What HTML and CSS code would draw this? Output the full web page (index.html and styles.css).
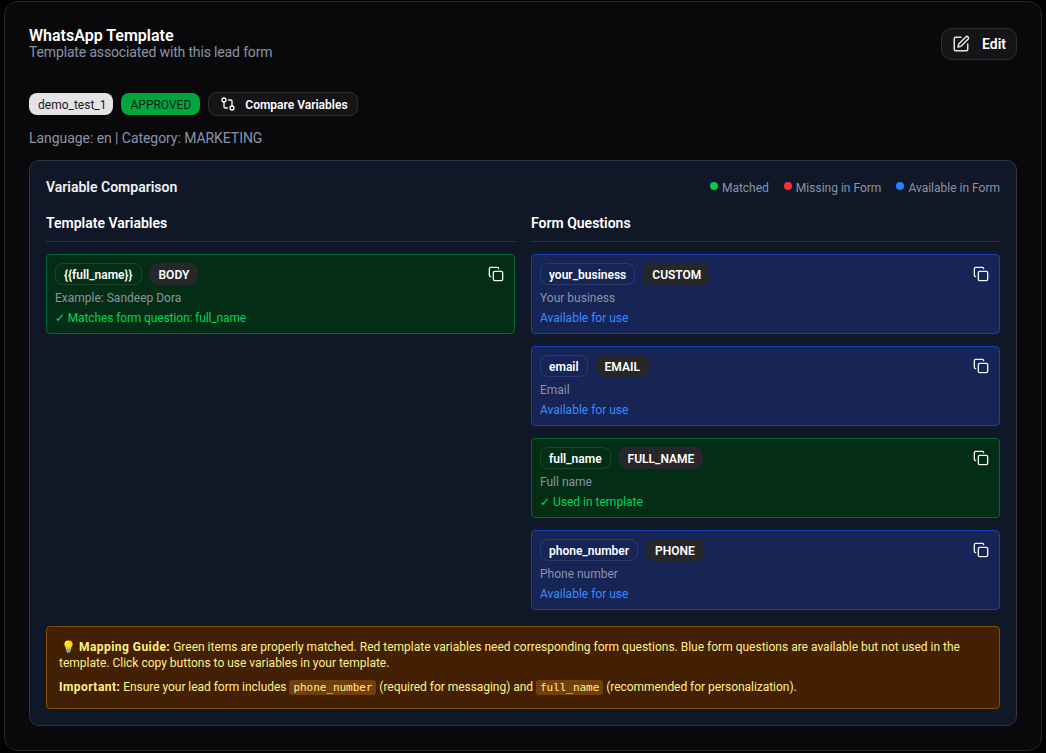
FILE: index.html
```html
<!DOCTYPE html>
<html lang="en">
<head>
  <title>WhatsApp Template</title>
  <meta charset="utf-8" />
  <link rel="stylesheet" href="styles.css">
</head>
<body>
  <section class="card">
    <header class="card-head">
      <div>
        <h1>WhatsApp Template</h1>
        <p class="sub">Template associated with this lead form</p>
      </div>
      <button class="btn btn-edit">
        <svg viewBox="0 0 24 24" width="18" height="18"><path d="M12 3H5a2 2 0 0 0-2 2v14a2 2 0 0 0 2 2h14a2 2 0 0 0 2-2v-7"/><path d="M18.4 2.6a2.1 2.1 0 0 1 3 3L12 15l-4 1 1-4z"/></svg>
        Edit
      </button>
    </header>

    <div class="chips">
      <span class="chip chip-name">demo_test_1</span>
      <span class="chip chip-ok">APPROVED</span>
      <button class="btn btn-compare">
        <svg viewBox="0 0 24 24" width="16" height="16"><circle cx="18" cy="18" r="3"/><circle cx="6" cy="6" r="3"/><path d="M13 6h3a2 2 0 0 1 2 2v7"/><path d="M11 18H8a2 2 0 0 1-2-2V9"/></svg>
        <span class="btn-label">Compare Variables</span>
      </button>
    </div>
    <p class="meta">Language: en | Category: MARKETING</p>

    <div class="panel">
      <div class="panel-head">
        <h2>Variable Comparison</h2>
        <div class="legend">
          <span><i class="dot dot-green"></i>Matched</span>
          <span><i class="dot dot-red"></i>Missing in Form</span>
          <span><i class="dot dot-blue"></i>Available in Form</span>
        </div>
      </div>

      <div class="cols">
        <div class="col">
          <h3>Template Variables</h3>
          <div class="item item-green">
            <div class="item-main">
              <div class="tags"><span class="tag">{{full_name}}</span><span class="kind">BODY</span></div>
              <p class="desc">Example: Sandeep Dora</p>
              <p class="state state-long">✓ Matches form question: full_name</p>
            </div>
            <svg class="copy" viewBox="0 0 24 24" width="16" height="16"><rect x="8" y="8" width="14" height="14" rx="2"/><path d="M4 16a2 2 0 0 1-2-2V4a2 2 0 0 1 2-2h10a2 2 0 0 1 2 2"/></svg>
          </div>
        </div>

        <div class="col">
          <h3>Form Questions</h3>
          <div class="item item-blue">
            <div class="item-main">
              <div class="tags"><span class="tag">your_business</span><span class="kind">CUSTOM</span></div>
              <p class="desc">Your business</p>
              <p class="state">Available for use</p>
            </div>
            <svg class="copy" viewBox="0 0 24 24" width="16" height="16"><rect x="8" y="8" width="14" height="14" rx="2"/><path d="M4 16a2 2 0 0 1-2-2V4a2 2 0 0 1 2-2h10a2 2 0 0 1 2 2"/></svg>
          </div>
          <div class="item item-blue">
            <div class="item-main">
              <div class="tags"><span class="tag">email</span><span class="kind">EMAIL</span></div>
              <p class="desc">Email</p>
              <p class="state">Available for use</p>
            </div>
            <svg class="copy" viewBox="0 0 24 24" width="16" height="16"><rect x="8" y="8" width="14" height="14" rx="2"/><path d="M4 16a2 2 0 0 1-2-2V4a2 2 0 0 1 2-2h10a2 2 0 0 1 2 2"/></svg>
          </div>
          <div class="item item-green">
            <div class="item-main">
              <div class="tags"><span class="tag">full_name</span><span class="kind">FULL_NAME</span></div>
              <p class="desc">Full name</p>
              <p class="state">✓ Used in template</p>
            </div>
            <svg class="copy" viewBox="0 0 24 24" width="16" height="16"><rect x="8" y="8" width="14" height="14" rx="2"/><path d="M4 16a2 2 0 0 1-2-2V4a2 2 0 0 1 2-2h10a2 2 0 0 1 2 2"/></svg>
          </div>
          <div class="item item-blue">
            <div class="item-main">
              <div class="tags"><span class="tag">phone_number</span><span class="kind">PHONE</span></div>
              <p class="desc">Phone number</p>
              <p class="state">Available for use</p>
            </div>
            <svg class="copy" viewBox="0 0 24 24" width="16" height="16"><rect x="8" y="8" width="14" height="14" rx="2"/><path d="M4 16a2 2 0 0 1-2-2V4a2 2 0 0 1 2-2h10a2 2 0 0 1 2 2"/></svg>
          </div>
        </div>
      </div>

      <div class="guide">
        <p><span class="bulb">💡</span><b>Mapping Guide:</b> Green items are properly matched. Red template variables need corresponding form questions. Blue form questions are available but not used in the template. Click copy buttons to use variables in your template.</p>
        <p class="guide-2"><b>Important:</b> Ensure your lead form includes <code>phone_number</code> (required for messaging) and <code>full_name</code> (recommended for personalization).</p>
      </div>
    </div>
  </section>
</body>
</html>
```

FILE: styles.css
```css
* {
  margin: 0;
  padding: 0;
  box-sizing: border-box;
}

html, body {
  height: 753px;
  overflow: hidden;
}

body {
  background: #020203;
  padding: 1px 4px 2px;
  font-family: Roboto, "Noto Sans", sans-serif;
  color: #fff;
}

svg {
  fill: none;
  stroke: currentColor;
  stroke-width: 2;
  stroke-linecap: round;
  stroke-linejoin: round;
  flex-shrink: 0;
}

.card {
  height: 750px;
  background: #09090b;
  border: 1px solid #27272a;
  border-radius: 14px;
  padding: 23px 24px 24px;
}

.card-head {
  display: flex;
  justify-content: space-between;
  align-items: flex-start;
  height: 67px;
}

h1 {
  margin-top: 3px;
  font-size: 16px;
  font-weight: 600;
  line-height: 16px;
}

.sub {
  font-size: 14px;
  line-height: 16px;
  letter-spacing: -0.15px;
  color: #8b93a7;
}

.btn {
  display: inline-flex;
  align-items: center;
  font-family: inherit;
  color: #fff;
  background: #151517;
  border: 1px solid #2e2e32;
}

.btn-edit {
  width: 76px;
  height: 32px;
  margin-top: 3px;
  padding-left: 10px;
  gap: 12px;
  border-radius: 10px;
  font-size: 14px;
  font-weight: 600;
}

.btn-edit svg {
  color: #e4e4e7;
}

.chips {
  display: flex;
  align-items: center;
  gap: 8px;
  height: 24px;
}

.chip {
  height: 22px;
  display: inline-flex;
  align-items: center;
  padding: 1px 7px 0 9px;
  border-radius: 8px;
  font-size: 12px;
}

.chip-name {
  background: #e4e4e7;
  color: #18181b;
}

.chip-ok {
  padding: 1px 9px 0;
  background: #00a63e;
  color: #0b2415;
}

.btn-compare {
  height: 24px;
  width: 150px;
  padding-left: 11px;
  gap: 9px;
  border-radius: 8px;
  font-size: 12px;
  font-weight: 600;
}

.btn-label {
  padding-top: 1px;
}

.meta {
  margin-top: 12px;
  margin-bottom: 12px;
  font-size: 14px;
  line-height: 20px;
  letter-spacing: -0.06px;
  color: #8b93a7;
}

.panel {
  height: 566px;
  background: #101828;
  border: 1px solid #2b3648;
  border-radius: 10px;
  padding: 16px;
}

.panel-head {
  display: flex;
  justify-content: space-between;
  align-items: center;
  height: 20px;
  margin-bottom: 16px;
}

h2 {
  font-size: 14px;
  font-weight: 600;
  color: #f0f2f6;
}

.legend {
  display: flex;
  gap: 15px;
  margin-top: 2px;
  font-size: 12px;
  color: #8b93a7;
}

.dot {
  display: inline-block;
  width: 8px;
  height: 8px;
  margin-right: 4px;
  border-radius: 50%;
  vertical-align: 2px;
}

.dot-green { background: #00c950; }
.dot-red { background: #fb2c36; }
.dot-blue { background: #2b7fff; }

.cols {
  display: grid;
  grid-template-columns: 1fr 1fr;
  gap: 16px;
  height: 413px;
}

h3 {
  height: 29px;
  margin-bottom: 12px;
  border-bottom: 1px solid #2b3648;
  font-size: 14px;
  font-weight: 600;
  line-height: 20px;
}

.item {
  display: flex;
  justify-content: space-between;
  height: 80px;
  margin-bottom: 12px;
  padding: 8px;
  border: 1px solid;
  border-radius: 4px;
}

.item-green {
  background: #032e15;
  border-color: #016630;
}

.item-blue {
  background: #162456;
  border-color: #193cb8;
}

.tags {
  display: flex;
  gap: 8px;
  height: 22px;
  margin-bottom: 3px;
}

.tag {
  display: inline-flex;
  align-items: center;
  padding: 1px 8px 0;
  border: 1px solid rgba(255, 255, 255, 0.1);
  border-radius: 8px;
  font-size: 12px;
  font-weight: 600;
}

.kind {
  display: inline-flex;
  align-items: center;
  padding: 1px 9px 0;
  background: #27272a;
  border-radius: 8px;
  font-size: 12px;
  font-weight: 600;
}

.desc {
  font-size: 12px;
  line-height: 20px;
  color: #8b93a7;
}

.state {
  font-size: 12px;
  line-height: 20px;
}

.state-long {
  letter-spacing: -0.12px;
}

.item-green .state { color: #00d35a; }
.item-blue .state { color: #3b8cff; }

.copy {
  margin: 3px 2px 0 0;
  color: #f4f4f5;
}

.guide {
  height: 83px;
  padding: 12px;
  background: #432004;
  border: 1px solid #894b00;
  border-radius: 4px;
  font-size: 12px;
  line-height: 16px;
  color: #fff085;
}

.guide b {
  letter-spacing: 0.45px;
}

.bulb {
  margin: 0 3px 0 2px;
}

.guide-2 {
  margin-top: 8px;
  letter-spacing: -0.04px;
}

code {
  padding: 1px 4px;
  background: #733e0a;
  border-radius: 3px;
  font-family: "DejaVu Sans Mono", monospace;
  font-size: 11px;
}
```
